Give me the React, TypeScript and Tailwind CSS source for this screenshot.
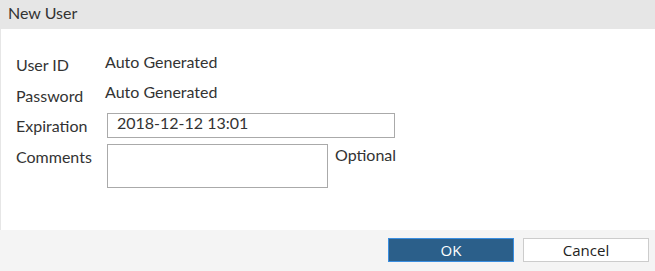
import React from 'react';

const App = () => {
  return (
    <div className="w-[655px] h-[271px] flex flex-col bg-white text-[16px] text-[#333] font-['Lato',sans-serif]">
      <div className="h-[29px] shrink-0 bg-[#e6e6e6] pl-2 pt-[3px] leading-5">New User</div>
      <div className="flex-1 border-l border-[#e6e6e6] pl-[15px] pt-[23px]">
        <div className="flex h-[30px]">
          <div className="w-[89px] mt-[3px] leading-5">User ID</div>
          <div className="leading-5">Auto Generated</div>
        </div>
        <div className="flex h-[31px]">
          <div className="w-[89px] mt-[4px] leading-5">Password</div>
          <div className="leading-5">Auto Generated</div>
        </div>
        <div className="flex items-start">
          <div className="w-[91px] mt-[3px] leading-5">Expiration</div>
          <div className="w-[288px] h-[25px] border border-[#aaa] pl-[9px] leading-[18px]">2018-12-12 13:01</div>
        </div>
        <div className="flex items-start mt-[6px]">
          <div className="w-[91px] mt-[3px] leading-5">Comments</div>
          <div className="w-[221px] h-[44px] border border-[#aaa]"></div>
          <div className="ml-[7px] mt-[1px] leading-5">Optional</div>
        </div>
      </div>
      <div className="h-[41px] shrink-0 bg-[#f4f4f4] flex justify-end items-start pt-2 pr-[6px] gap-[9px] font-['Open_Sans',sans-serif] text-[15px]">
        <button className="w-[126px] h-[24px] bg-[#2b5f8a] border border-[#3a8ee0] text-white leading-[20px]">OK</button>
        <button className="w-[126px] h-[24px] bg-white border border-[#ccc] text-[#222] leading-[20px]">Cancel</button>
      </div>
    </div>
  );
};

export default App;
